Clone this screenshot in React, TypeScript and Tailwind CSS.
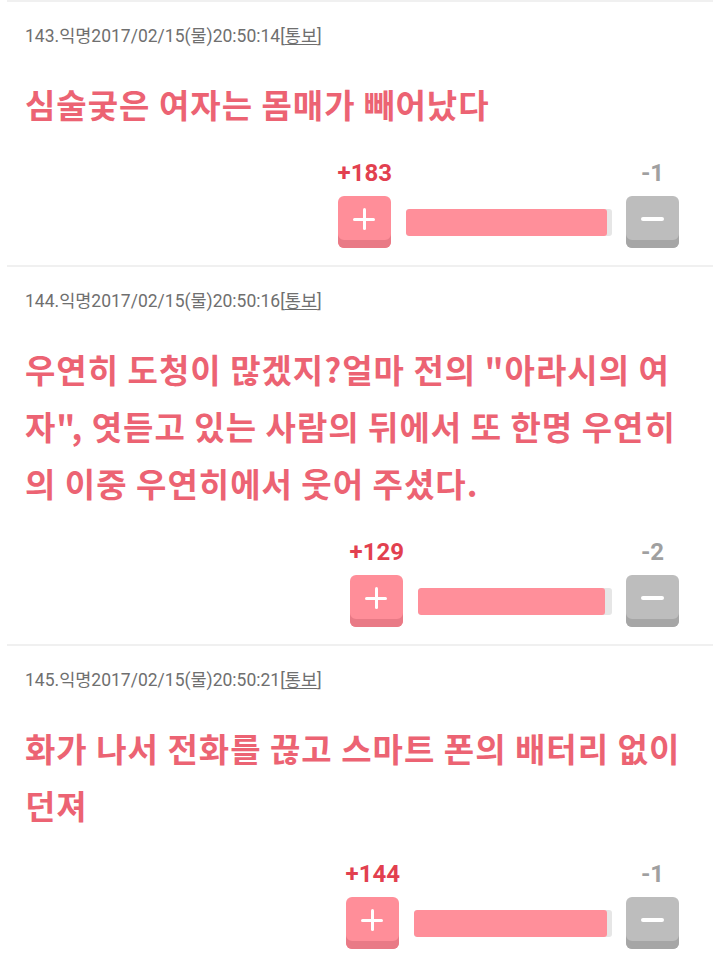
type Reply = {
  no: number;
  time: string;
  text: string;
  up: number;
  down: number;
  barW: number;
  fillW: number;
};

const replies: Reply[] = [
  {
    no: 143,
    time: "2017/02/15(물)20:50:14",
    text: "심술궂은 여자는 몸매가 빼어났다",
    up: 183,
    down: 1,
    barW: 206,
    fillW: 201,
  },
  {
    no: 144,
    time: "2017/02/15(물)20:50:16",
    text: '우연히 도청이 많겠지?얼마 전의 "아라시의 여자", 엿듣고 있는 사람의 뒤에서 또 한명 우연히의 이중 우연히에서 웃어 주셨다.',
    up: 129,
    down: 2,
    barW: 194,
    fillW: 187,
  },
  {
    no: 145,
    time: "2017/02/15(물)20:50:21",
    text: "화가 나서 전화를 끊고 스마트 폰의 배터리 없이 던져",
    up: 144,
    down: 1,
    barW: 198,
    fillW: 193,
  },
];

const Divider = () => <div className="mx-[7px] h-[2px] bg-[#f0f0f0]" />;

const VoteRow = ({ r }: { r: Reply }) => (
  <div className="mt-[26px] flex items-end justify-end pr-[16px]">
    <div className="flex flex-col">
      <span className="mb-[9px] text-[24px] leading-[28px] font-bold text-[#e2404f] font-['Roboto','Noto_Sans_CJK_KR',sans-serif]">
        +{r.up}
      </span>
      <div className="flex h-[52px] w-[53px] items-center justify-center rounded-[6px] bg-[#ff8e99] pb-[6px] shadow-[inset_0_-8px_0_#e97a86]">
        <div className="relative h-[22px] w-[22px]">
          <div className="absolute left-0 top-[9.5px] h-[3px] w-[22px] rounded-full bg-white" />
          <div className="absolute left-[9.5px] top-0 h-[22px] w-[3px] rounded-full bg-white" />
        </div>
      </div>
    </div>
    <div
      className="mx-[14px] mb-[12px] flex h-[27px] overflow-hidden rounded-[3px] bg-[#e6e6e6]"
      style={{ width: r.barW }}
    >
      <div className="h-full rounded-[3px] bg-[#ff8f9a]" style={{ width: r.fillW }} />
    </div>
    <div className="flex flex-col items-center">
      <span className="mb-[9px] text-[24px] leading-[28px] font-bold text-[#a0a0a0] font-['Roboto','Noto_Sans_CJK_KR',sans-serif]">
        -{r.down}
      </span>
      <div className="flex h-[52px] w-[53px] items-center justify-center rounded-[6px] bg-[#bdbdbd] pb-[6px] shadow-[inset_0_-8px_0_#a6a6a6]">
        <div className="h-[4px] w-[23px] rounded-full bg-white" />
      </div>
    </div>
  </div>
);

const ReplyItem = ({ r }: { r: Reply }) => (
  <div>
    <div className="px-[25px] pb-[17px] pt-[23px]">
      <div className="text-[17.5px] leading-[22px] text-[#6f6f6f] font-['Roboto','Noto_Sans_CJK_KR',sans-serif]">
        {r.no}.익명{r.time}[<span className="underline underline-offset-2">통보</span>]
      </div>
      <p className="mt-[29px] pr-[12px] text-[33px] leading-[57px] tracking-[1px] font-bold text-[#ec6373] font-['Noto_Sans_CJK_KR',sans-serif]">
        {r.text}
      </p>
      <VoteRow r={r} />
    </div>
    <Divider />
  </div>
);

export default function App() {
  return (
    <div className="h-[960px] w-[720px] overflow-hidden bg-white">
      <Divider />
      {replies.map((r) => (
        <ReplyItem key={r.no} r={r} />
      ))}
    </div>
  );
}
